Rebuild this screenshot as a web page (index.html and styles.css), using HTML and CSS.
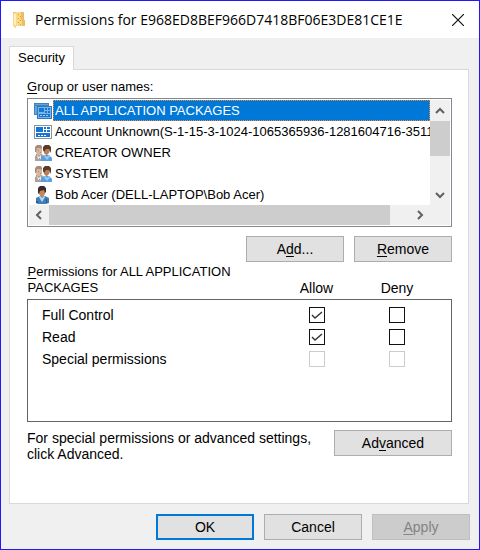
FILE: index.html
```html
<!DOCTYPE html>
<html lang="en">
<head>
    <meta charset="UTF-8">
    <meta name="viewport" content="width=device-width, initial-scale=1.0">
    <title>Permissions</title>
    <link rel="stylesheet" href="styles.css">
</head>
<body>
    <!-- Shared icons -->
    <svg class="sprite" aria-hidden="true">
        <symbol id="icon-group" viewBox="0 0 18 16">
            <path fill="#a9a19b" d="M1 16V11L4 9H8L10 12V16Z"/>
            <path fill="#d3b7a2" d="M2 3L4 1H7L8 3V8L6 10H4L2 8Z"/>
            <path fill="#a68c7c" d="M1 4V2L3 0H7L8 2V4L6 3H3L2 7H1Z"/>
            <path fill="#efe6de" d="M3 10L5 12L7 10V14H4Z"/>
            <path fill="#d9823f" d="M4 5H5V6H4ZM6 7H7V8H6ZM2 9H3V10H2ZM5 13H6V14H5Z"/>
            <path fill="#5b9fe0" d="M7 16V12L10 10H15L18 13V16Z"/>
            <path fill="#b97f55" d="M10 3H15V8L13 10H12L10 8Z"/>
            <path fill="#5a3a28" d="M9 5V2L11 0H15L17 2V6L16 8L15 4H12L10 7Z"/>
            <path fill="#9cccf5" d="M11 10L13 12L15 10L16 11L13 15L10 11Z"/>
        </symbol>
        <symbol id="icon-user" viewBox="0 0 18 18">
            <path fill="#3f7fb8" d="M2 17V12L6 10H11L15 12V17L12 18H4Z"/>
            <path fill="#c08a60" d="M5 4H11V8L9 11H7L5 8Z"/>
            <path fill="#3c2c28" d="M4 7V2L6 0H10L12 2V6L11 7L10 4L6 5L5 8Z"/>
            <path fill="#b8dcf5" d="M6 10L8 12L10 10L11 11L8 16L5 11Z"/>
            <path fill="#2a5784" d="M2 15H4V17H2ZM12 13H13V17H12Z"/>
        </symbol>
        <symbol id="icon-package" viewBox="0 0 18 14">
            <path fill="#8a929c" d="M0 0H18V14H0Z"/>
            <path fill="#fff" d="M1 1H17V13H1Z"/>
            <path fill="#1677d2" d="M2 2H9V7H2ZM10 2H12V4H10ZM13 2H16V4H13ZM10 5H12V7H10ZM13 5H16V7H13ZM2 8H16V12H2Z"/>
            <path fill="#fff" d="M4 10H6V11H4ZM7 10H9V11H7ZM10 10H12V11H10Z"/>
        </symbol>
        <symbol id="icon-packages" viewBox="0 0 18 16">
            <path fill="#3f82bd" d="M0 0H15V12H0Z"/>
            <path fill="#5ea6df" d="M1 1H14V2H1ZM1 3H3V11H1Z"/>
            <path fill="#3676b4" d="M3 3H18V16H3Z"/>
            <path fill="#78b6e8" d="M4 4H17V15H4Z"/>
            <path fill="#1677d2" d="M5 5H10V9H5ZM11 5H13V7H11ZM14 5H16V7H14ZM11 8H13V10H11ZM14 8H16V10H14ZM5 11H16V14H5Z"/>
            <path fill="#9bcdf4" d="M6 12H8V13H6ZM9 12H11V13H9ZM12 12H14V13H12Z"/>
        </symbol>
    </svg>

    <form class="dialog" onsubmit="return false">
        <header class="title-bar">
            <svg class="folder" width="12" height="17" viewBox="0 0 12 17" aria-hidden="true">
                <path fill="#f8d98a" d="M0 1H10V9H12V15H3V17H2L0 15Z"/>
                <path fill="#edbd61" d="M8 1H11V9H12V15H9V9H8ZM0 1H2V2H0Z"/>
                <path fill="#fff0be" d="M1 3H3V14H2L1 13Z"/>
                <path fill="#d99a43" d="M5 3H6V4H5ZM7 5H8V6H7ZM5 7H6V8H5ZM7 9H8V10H7ZM5 11H6V12H5ZM7 13H8V14H7Z"/>
            </svg>
            <h1>Permissions for E968ED8BEF966D7418BF06E3DE81CE1E</h1>
            <button type="button" class="close" aria-label="Close">
                <svg width="12" height="12" viewBox="0 0 12 12"><path d="M0 0L12 12M12 0L0 12" stroke="#111" stroke-width="1.2"/></svg>
            </button>
        </header>

        <main>
            <div class="tabs" role="tablist">
                <button type="button" class="tab" role="tab" aria-selected="true">Security</button>
            </div>

            <section class="panel" role="tabpanel">
                <div class="list-label" id="groupLabel"><u>G</u>roup or user names:</div>
                <div class="list-box">
                    <ul class="users" role="listbox" aria-labelledby="groupLabel">
                        <li role="option" aria-selected="true" class="selected"><svg width="18" height="16"><use href="#icon-packages"/></svg><span>ALL APPLICATION PACKAGES</span></li>
                        <li role="option"><svg width="18" height="14"><use href="#icon-package"/></svg><span>Account Unknown(S-1-15-3-1024-1065365936-1281604716-35117</span></li>
                        <li role="option"><svg width="18" height="16"><use href="#icon-group"/></svg><span>CREATOR OWNER</span></li>
                        <li role="option"><svg width="18" height="16"><use href="#icon-group"/></svg><span>SYSTEM</span></li>
                        <li role="option"><svg width="18" height="18"><use href="#icon-user"/></svg><span>Bob Acer (DELL-LAPTOP\Bob Acer)</span></li>
                    </ul>
                    <div class="scroll-v">
                        <button type="button" aria-label="Scroll up"><svg width="10" height="8" viewBox="0 0 10 8"><path d="M1 6L5 2L9 6"/></svg></button>
                        <div class="thumb"></div>
                        <button type="button" aria-label="Scroll down"><svg width="10" height="8" viewBox="0 0 10 8"><path d="M1 2L5 6L9 2"/></svg></button>
                    </div>
                    <div class="scroll-h">
                        <button type="button" aria-label="Scroll left"><svg width="8" height="10" viewBox="0 0 8 10"><path d="M6 1L2 5L6 9"/></svg></button>
                        <div class="thumb"></div>
                        <button type="button" aria-label="Scroll right"><svg width="8" height="10" viewBox="0 0 8 10"><path d="M2 1L6 5L2 9"/></svg></button>
                    </div>
                </div>

                <div class="list-actions">
                    <button type="button" class="btn">A<u>d</u>d...</button>
                    <button type="button" class="btn"><u>R</u>emove</button>
                </div>

                <table class="permissions">
                    <colgroup>
                        <col>
                        <col class="col-allow">
                        <col class="col-deny">
                    </colgroup>
                    <thead>
                        <tr>
                            <th scope="col"><u>P</u>ermissions for ALL APPLICATION PACKAGES</th>
                            <th scope="col">Allow</th>
                            <th scope="col">Deny</th>
                        </tr>
                    </thead>
                    <tbody>
                        <tr>
                            <th scope="row">Full Control</th>
                            <td><input type="checkbox" aria-label="Allow Full Control" checked></td>
                            <td><input type="checkbox" aria-label="Deny Full Control"></td>
                        </tr>
                        <tr>
                            <th scope="row">Read</th>
                            <td><input type="checkbox" aria-label="Allow Read" checked></td>
                            <td><input type="checkbox" aria-label="Deny Read"></td>
                        </tr>
                        <tr>
                            <th scope="row">Special permissions</th>
                            <td><input type="checkbox" aria-label="Allow Special permissions" disabled></td>
                            <td><input type="checkbox" aria-label="Deny Special permissions" disabled></td>
                        </tr>
                    </tbody>
                </table>

                <div class="advanced">
                    <p>For special permissions or advanced settings, click Advanced.</p>
                    <button type="button" class="btn btn-wide">Ad<u>v</u>anced</button>
                </div>
            </section>
        </main>

        <footer class="dialog-actions">
            <button type="submit" class="btn btn-default">OK</button>
            <button type="button" class="btn">Cancel</button>
            <button type="button" class="btn" disabled><u>A</u>pply</button>
        </footer>
    </form>
</body>
</html>
```
FILE: styles.css
```css
* {
    margin: 0;
    padding: 0;
    box-sizing: border-box;
}

body {
    font-family: "Liberation Sans", Arial, sans-serif;
    font-size: 14px;
    line-height: 16px;
    color: #000;
    background: #f0f0f0;
}

button {
    font: inherit;
    color: inherit;
    border: none;
    background: none;
}

u {
    text-underline-offset: 2px;
    text-decoration-skip-ink: none;
}

.sprite {
    display: none;
}

.dialog {
    min-height: 100vh;
    display: flex;
    flex-direction: column;
    border: 1px solid #2218ff;
}

/* Title bar */
.title-bar {
    display: flex;
    align-items: center;
    height: 37px;
    padding: 0 8px 0 12px;
    background: #fff;
}

.title-bar h1 {
    flex: 1;
    margin-left: 10px;
    font-family: "Open Sans", "Segoe UI", sans-serif;
    font-size: 14px;
    font-weight: normal;
    line-height: 20px;
    white-space: nowrap;
}

.close {
    display: flex;
    align-items: center;
    justify-content: center;
    width: 26px;
    height: 26px;
}

main {
    flex: 1;
    display: flex;
    flex-direction: column;
    padding: 8px 10px 0 8px;
}

.tab,
.list-label,
.users,
.permissions thead th:first-child {
    font-size: 13px;
}

/* Tab overlaps the panel's top border */
.tab {
    display: block;
    position: relative;
    height: 24px;
    margin-bottom: -1px;
    padding: 0 8px 2px;
    background: #fff;
    border: 1px solid #d9d9d9;
    border-bottom: none;
}

.panel {
    flex: 1;
    padding: 9px 16px 16px 17px;
    background: #fff;
    border: 1px solid #d9d9d9;
}

.list-label {
    margin-bottom: 3px;
}

/* User list */
.list-box {
    display: grid;
    grid-template-columns: minmax(0, 1fr) 20px;
    grid-template-rows: 105px 20px;
    padding: 1px;
    border: 1px solid #828790;
}

.users {
    list-style: none;
    overflow: hidden;
}

.users li {
    display: flex;
    align-items: center;
    height: 21px;
    padding-left: 5px;
}

.users svg {
    flex: none;
    margin-right: 1px;
}

.users span {
    flex: 1;
    padding: 2px 1px 1px;
    line-height: 16px;
    white-space: nowrap;
    border: 1px solid transparent;
}

.users .selected span {
    color: #fff;
    background: #0078d7;
    border: 1px dotted #ff8728;
}

.scroll-v,
.scroll-h {
    display: flex;
    background: #f0f0f0;
}

.scroll-v {
    flex-direction: column;
    justify-content: space-between;
}

.scroll-h {
    grid-column: 1 / -1;
    padding-right: 20px;
}

.scroll-v button,
.scroll-h button {
    display: flex;
    align-items: center;
    justify-content: center;
    width: 20px;
    height: 21px;
}

.scroll-h button {
    height: 20px;
}

.scroll-v path,
.scroll-h path {
    fill: none;
    stroke: #606060;
    stroke-width: 2;
}

.thumb {
    background: #cdcdcd;
}

.scroll-v .thumb {
    height: 35px;
    margin-bottom: auto;
}

.scroll-h .thumb {
    width: 85%;
    margin-right: auto;
}

/* Buttons */
.btn {
    width: 98px;
    height: 26px;
    background: #e1e1e1;
    border: 1px solid #adadad;
}

.btn-wide {
    width: 118px;
}

.btn-default {
    border: 2px solid #0078d7;
}

.btn:disabled {
    color: #838383;
    background: #ccc;
    border-color: #bfbfbf;
}

.list-actions {
    display: flex;
    justify-content: flex-end;
    gap: 10px;
    margin-top: 9px;
}

/* Permissions */
.permissions {
    width: 100%;
    margin-top: 2px;
    table-layout: fixed;
    border-collapse: collapse;
}

.col-allow {
    width: 80px;
}

.col-deny {
    width: 95px;
}

.permissions th {
    font-weight: normal;
    text-align: left;
}

.permissions thead th {
    height: 35px;
    padding-bottom: 3px;
    vertical-align: bottom;
}

.permissions thead th:first-child {
    padding-right: 24px;
}

.permissions thead th + th,
.permissions td {
    text-align: center;
}

.permissions th:last-child,
.permissions td:last-child {
    padding-right: 14px;
}

.permissions tbody {
    border: 1px solid #646464;
}

.permissions tbody tr {
    height: 22px;
}

.permissions tbody th {
    padding-left: 14px;
}

.permissions tbody tr:first-child > * {
    padding-top: 4px;
}

.permissions tbody tr:last-child > * {
    padding-bottom: 51px;
}

.permissions input {
    appearance: none;
    display: block;
    width: 16px;
    height: 16px;
    margin: 3px auto;
    background: #fff;
    border: 1px solid #111;
}

.permissions input:checked {
    background: #fff url("data:image/svg+xml,%3Csvg xmlns='http://www.w3.org/2000/svg' viewBox='0 0 14 14'%3E%3Cpath d='M2 7L5 10L12 4' fill='none' stroke='%23333' stroke-width='1.4'/%3E%3C/svg%3E") center / 14px no-repeat;
}

.permissions input:disabled {
    border-color: #ccc;
}

.advanced {
    display: flex;
    justify-content: space-between;
    margin-top: 8px;
}

.advanced p {
    flex: 1;
    padding-right: 8px;
}

.dialog-actions {
    display: flex;
    justify-content: flex-end;
    gap: 10px;
    padding: 10px 9px 9px;
}
```
